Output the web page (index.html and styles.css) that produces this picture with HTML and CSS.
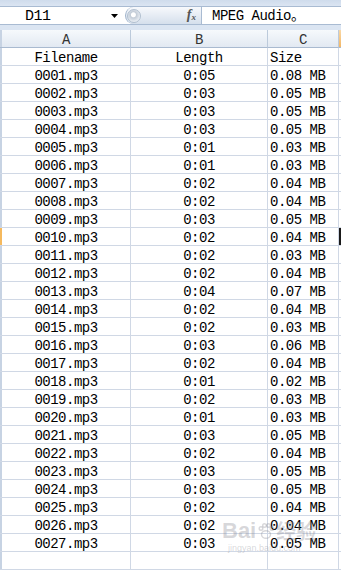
FILE: index.html
```html
<!DOCTYPE html>
<html>
<head>
<meta charset="utf-8">
<link rel="stylesheet" href="styles.css">
</head>
<body>
<div class="app">
  <div class="topstrip"></div>
  <div class="fbar">
    <div class="namebox">
      <span class="nbtext">D11</span>
      <svg class="arrow" width="7" height="4" viewBox="0 0 7 4"><path d="M0 0H7L3.5 4Z" fill="#000"/></svg>
    </div>
    <div class="pill">
      <span class="knob"></span>
      <span class="fx">f<sub>x</sub></span>
    </div>
    <div class="formula">MPEG Audio。</div>
  </div>
  <div class="gap"></div>
  <div class="sheet">
    <div class="row hdr"><div class="e"></div><div class="a">A</div><div class="b">B</div><div class="c">C</div><div class="d"></div></div>
    <div class="row"><div class="e"></div><div class="a">Filename</div><div class="b">Length</div><div class="c">Size</div><div class="d"></div></div>
    <div class="row"><div class="e"></div><div class="a">0001.mp3</div><div class="b">0:05</div><div class="c">0.08 MB</div><div class="d"></div></div>
    <div class="row"><div class="e"></div><div class="a">0002.mp3</div><div class="b">0:03</div><div class="c">0.05 MB</div><div class="d"></div></div>
    <div class="row"><div class="e"></div><div class="a">0003.mp3</div><div class="b">0:03</div><div class="c">0.05 MB</div><div class="d"></div></div>
    <div class="row"><div class="e"></div><div class="a">0004.mp3</div><div class="b">0:03</div><div class="c">0.05 MB</div><div class="d"></div></div>
    <div class="row"><div class="e"></div><div class="a">0005.mp3</div><div class="b">0:01</div><div class="c">0.03 MB</div><div class="d"></div></div>
    <div class="row"><div class="e"></div><div class="a">0006.mp3</div><div class="b">0:01</div><div class="c">0.03 MB</div><div class="d"></div></div>
    <div class="row"><div class="e"></div><div class="a">0007.mp3</div><div class="b">0:02</div><div class="c">0.04 MB</div><div class="d"></div></div>
    <div class="row"><div class="e"></div><div class="a">0008.mp3</div><div class="b">0:02</div><div class="c">0.04 MB</div><div class="d"></div></div>
    <div class="row"><div class="e"></div><div class="a">0009.mp3</div><div class="b">0:03</div><div class="c">0.05 MB</div><div class="d"></div></div>
    <div class="row sel"><div class="e"></div><div class="a">0010.mp3</div><div class="b">0:02</div><div class="c">0.04 MB</div><div class="d"></div></div>
    <div class="row"><div class="e"></div><div class="a">0011.mp3</div><div class="b">0:02</div><div class="c">0.03 MB</div><div class="d"></div></div>
    <div class="row"><div class="e"></div><div class="a">0012.mp3</div><div class="b">0:02</div><div class="c">0.04 MB</div><div class="d"></div></div>
    <div class="row"><div class="e"></div><div class="a">0013.mp3</div><div class="b">0:04</div><div class="c">0.07 MB</div><div class="d"></div></div>
    <div class="row"><div class="e"></div><div class="a">0014.mp3</div><div class="b">0:02</div><div class="c">0.04 MB</div><div class="d"></div></div>
    <div class="row"><div class="e"></div><div class="a">0015.mp3</div><div class="b">0:02</div><div class="c">0.03 MB</div><div class="d"></div></div>
    <div class="row"><div class="e"></div><div class="a">0016.mp3</div><div class="b">0:03</div><div class="c">0.06 MB</div><div class="d"></div></div>
    <div class="row"><div class="e"></div><div class="a">0017.mp3</div><div class="b">0:02</div><div class="c">0.04 MB</div><div class="d"></div></div>
    <div class="row"><div class="e"></div><div class="a">0018.mp3</div><div class="b">0:01</div><div class="c">0.02 MB</div><div class="d"></div></div>
    <div class="row"><div class="e"></div><div class="a">0019.mp3</div><div class="b">0:02</div><div class="c">0.03 MB</div><div class="d"></div></div>
    <div class="row"><div class="e"></div><div class="a">0020.mp3</div><div class="b">0:01</div><div class="c">0.03 MB</div><div class="d"></div></div>
    <div class="row"><div class="e"></div><div class="a">0021.mp3</div><div class="b">0:03</div><div class="c">0.05 MB</div><div class="d"></div></div>
    <div class="row"><div class="e"></div><div class="a">0022.mp3</div><div class="b">0:02</div><div class="c">0.04 MB</div><div class="d"></div></div>
    <div class="row"><div class="e"></div><div class="a">0023.mp3</div><div class="b">0:03</div><div class="c">0.05 MB</div><div class="d"></div></div>
    <div class="row"><div class="e"></div><div class="a">0024.mp3</div><div class="b">0:03</div><div class="c">0.05 MB</div><div class="d"></div></div>
    <div class="row"><div class="e"></div><div class="a">0025.mp3</div><div class="b">0:02</div><div class="c">0.04 MB</div><div class="d"></div></div>
    <div class="row"><div class="e"></div><div class="a">0026.mp3</div><div class="b">0:02</div><div class="c">0.04 MB</div><div class="d"></div></div>
    <div class="row"><div class="e"></div><div class="a">0027.mp3</div><div class="b">0:03</div><div class="c">0.05 MB</div><div class="d"></div></div>
    <div class="row"><div class="e"></div><div class="a"></div><div class="b"></div><div class="c"></div><div class="d"></div></div>
    <div class="watermark">
      <div class="wm-top"><span class="wm-bai">Bai</span><svg class="paw" width="18" height="18" viewBox="0 0 18 18"><g fill="none" stroke="currentColor" stroke-width="1.4"><ellipse cx="9" cy="12.5" rx="4.5" ry="3.8"/><circle cx="4" cy="6.5" r="1.8"/><circle cx="7.5" cy="3.5" r="1.8"/><circle cx="11.5" cy="3.5" r="1.8"/><circle cx="15" cy="6.5" r="1.8"/></g></svg><span class="wm-jy">经验</span></div>
      <div class="wm-url">jingyan.baidu.com</div>
    </div>
  </div>
</div>
</body>
</html>
```
FILE: styles.css
```css
html, body {
  margin: 0;
  padding: 0;
  background: #dfe8f4;
}
.app {
  width: 341px;
  height: 570px;
  overflow: hidden;
  font-family: "Liberation Mono", "Noto Sans CJK SC", monospace;
  font-size: 14px;
  letter-spacing: -0.5px;
  color: #000;
}
.topstrip {
  height: 6px;
  background: linear-gradient(#cfdcec, #dbe5f2);
}
.fbar {
  height: 17px;
  display: flex;
  background: #fff;
  border-top: 1px solid #a9bbd2;
  border-bottom: 1px solid #a9bbd2;
}
.namebox {
  width: 122px;
  display: flex;
  align-items: center;
  background: #fff;
}
.nbtext {
  margin-left: 25px;
  flex: 1;
  font-size: 15px;
  line-height: 19px;
  height: 17px;
  overflow: hidden;
}
.arrow {
  margin-right: 4px;
}
.pill {
  width: 76px;
  margin-left: 3px;
  display: flex;
  align-items: center;
  justify-content: space-between;
  background: linear-gradient(#f7f9fc, #d5dfec);
  border-left: 1px solid #9fb3cb;
  border-radius: 9px 0 0 9px;
  box-sizing: border-box;
}
.knob {
  width: 14px;
  height: 14px;
  margin-left: 1px;
  border-radius: 50%;
  background: radial-gradient(circle at 45% 40%, #ffffff 0 2px, #c3ccd7 3px, #e9eef4 7px);
  border: 1px solid #b1bfcf;
  box-sizing: border-box;
}
.fx {
  font-family: "Liberation Serif", serif;
  font-style: italic;
  font-weight: bold;
  font-size: 14px;
  letter-spacing: 0;
  color: #555;
  margin-right: 5px;
  line-height: 17px;
}
.fx sub {
  font-size: 9px;
  vertical-align: -1px;
}
.formula {
  flex: 1;
  border-left: 1px solid #a9bbd2;
  padding-left: 10px;
  line-height: 19px;
  height: 17px;
  overflow: hidden;
  background: #fff;
}
.gap {
  height: 5px;
  background: #dbe5f2;
}
.sheet {
  position: relative;
}
.row {
  display: grid;
  grid-template-columns: 2px 129px 137px 71px 2px;
  height: 18px;
  background: #fff;
}
.row > div {
  border-bottom: 1px solid #d0d8e5;
  line-height: 20px;
  height: 17px;
  white-space: nowrap;
  overflow: hidden;
}
.e {
  background: #c7d3e3;
}
.a, .b {
  text-align: center;
  border-right: 1px solid #d0d8e5;
}
.c {
  padding-left: 2px;
  border-right: 1px solid #d0d8e5;
}
.hdr > div {
  background: linear-gradient(#f6f9fc, #e2e9f2);
  border-bottom: 1px solid #a9bad0;
  color: #333;
}
.hdr .a, .hdr .b, .hdr .c {
  border-right: 1px solid #bccadb;
}
.hdr .c {
  padding-left: 0;
  text-align: center;
}
.hdr .e {
  background: #c7d3e3;
}
.hdr .d {
  background: linear-gradient(#f9d8a6, #f3b766);
}
.sel .e {
  background: #f5b95e;
}
.sel .d {
  background: #1a1a1a;
}
.watermark {
  position: absolute;
  left: 222px;
  top: 486px;
  color: rgba(140, 140, 150, 0.35);
  font-family: "Liberation Sans", "Noto Sans CJK SC", sans-serif;
  letter-spacing: 0;
  pointer-events: none;
}
.wm-top {
  display: flex;
  align-items: center;
}
.wm-bai {
  font-size: 22px;
  font-weight: bold;
}
.paw {
  margin: 0 1px;
}
.wm-jy {
  font-size: 20px;
  font-weight: bold;
}
.wm-url {
  font-size: 9px;
  margin-left: 6px;
  margin-top: -2px;
}
```
